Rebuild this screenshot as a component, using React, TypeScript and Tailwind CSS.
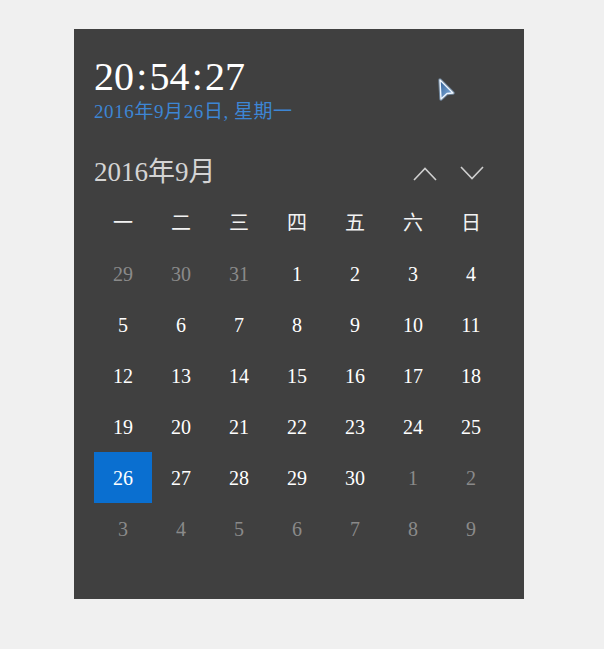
const weekdays = ["一", "二", "三", "四", "五", "六", "日"];

type Day = { n: number; cur: boolean };

const days: Day[] = [
  ...[29, 30, 31].map((n) => ({ n, cur: false })),
  ...Array.from({ length: 30 }, (_, i) => ({ n: i + 1, cur: true })),
  ...Array.from({ length: 9 }, (_, i) => ({ n: i + 1, cur: false })),
];

function Chevron({ up }: { up?: boolean }) {
  return (
    <svg width="24" height="15" viewBox="0 0 24 15" fill="none">
      <path
        d={up ? "M1 14 L12 2.5 L23 14" : "M1 1 L12 12.5 L23 1"}
        stroke="#cfcfcf"
        strokeWidth="1.6"
      />
    </svg>
  );
}

function Cursor() {
  return (
    <svg width="22" height="26" viewBox="0 0 22 26" className="absolute left-[362px] top-[48px]">
      <defs>
        <linearGradient id="cg" x1="0" y1="0" x2="1" y2="1">
          <stop offset="0" stopColor="#2f5f96" />
          <stop offset="1" stopColor="#8fb8e4" />
        </linearGradient>
      </defs>
      <path d="M4 3 L17 16 L11 16.5 L5 22 Z" fill="none" stroke="#9cc6f0" strokeOpacity="0.5" strokeWidth="3.5" strokeLinejoin="round" />
      <path d="M4 3 L17 16 L11 16.5 L5 22 Z" fill="url(#cg)" stroke="#eef6ff" strokeWidth="1.4" strokeLinejoin="round" />
    </svg>
  );
}

function Colon() {
  return <span className="inline-block w-[15.5px] text-center">:</span>;
}

export default function App() {
  return (
    <div
      className="w-[604px] h-[649px] bg-[#f0f0f0] pt-[29px] pl-[74px]"
      style={{ fontFamily: '"Liberation Serif", "Noto Sans CJK SC", serif' }}
    >
      <div className="relative w-[450px] h-[570px] bg-[#404040] pt-[27px] pl-[20px] pr-[24px]">
        <Cursor />
        <div className="text-[40px] leading-[41px] h-[41px] text-white whitespace-nowrap">
          20<Colon />54<Colon />27
        </div>
        <div className="mt-[5px] h-[19px] text-[19px] leading-[19px] text-[#3d86d4] tracking-[0.6px] whitespace-nowrap">
          2016年9月26日<span className="mr-[5px]">,</span>星期一
        </div>

        <div className="mt-[38px] h-[27px] flex items-center justify-between">
          <span className="text-[27px] leading-[27px] text-[#d4d4d4] whitespace-nowrap">2016年9月</span>
          <div className="flex items-center gap-[23px] mr-[16px] mt-[2px]">
            <Chevron up />
            <Chevron />
          </div>
        </div>

        <div className="mt-[11px] grid grid-cols-[repeat(7,58px)] auto-rows-[51px]">
          {weekdays.map((w) => (
            <div key={w} className="flex items-center justify-center text-[20px] text-[#f2f2f2]">
              {w}
            </div>
          ))}
          {days.map((d, i) => {
            const selected = d.cur && d.n === 26;
            return (
              <div
                key={i}
                className={
                  selected
                    ? "flex items-center justify-center text-[20px] bg-[#0a6fd0] text-white"
                    : d.cur
                    ? "flex items-center justify-center text-[20px] text-white"
                    : "flex items-center justify-center text-[20px] text-[#8a8a8a]"
                }
              >
                {d.n}
              </div>
            );
          })}
        </div>
      </div>
    </div>
  );
}
